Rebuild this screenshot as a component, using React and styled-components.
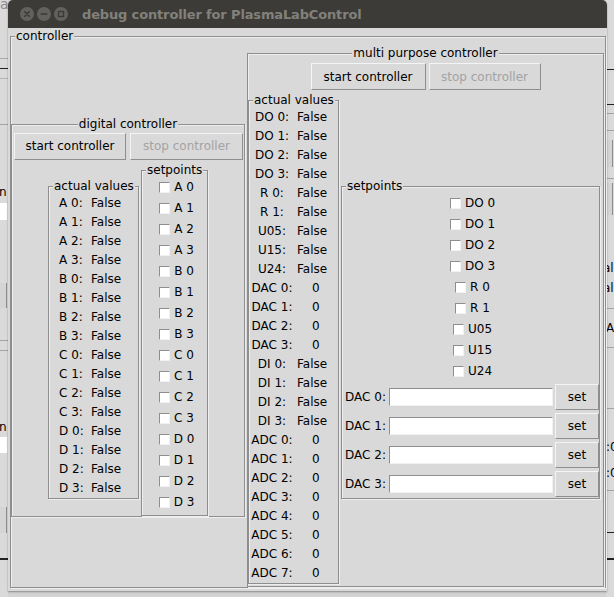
import React from 'react';
import styled, { createGlobalStyle } from 'styled-components';

const BG = '#d9d9d9';
const DARK = '#8e8e8e';
const LIGHT = '#eeeeee';

const GlobalStyle = createGlobalStyle`
  *, *::before, *::after {
    box-sizing: border-box;
  }
  html, body {
    margin: 0;
    padding: 0;
  }
  body {
    width: 614px;
    height: 597px;
    overflow: hidden;
    font-family: "DejaVu Sans", sans-serif;
    font-size: 12px;
    color: #000;
  }
`;

const Desktop = styled.div`
  position: relative;
  width: 614px;
  height: 597px;
  overflow: hidden;
  background: #d3d3d3;
`;

/* bits of the window lying behind */
const Mark = styled.div`
  position: absolute;
  top: ${p => p.$top}px;
  left: ${p => p.$left}px;
  width: ${p => p.$w}px;
  height: ${p => p.$h}px;
  background: ${p => p.$c};
  border-right: ${p => (p.$edge ? `1px solid ${DARK}` : 'none')};
`;

const BackText = styled.span`
  position: absolute;
  top: ${p => p.$top}px;
  left: ${p => p.$left}px;
  font-size: ${p => p.$size || 12}px;
  color: ${p => p.$c || '#000'};
  line-height: 1;
`;

const backMarks = [
  { top: 0, left: 0, w: 8, h: 597, c: '#dadada' },
  { top: 0, left: 606, w: 8, h: 597, c: '#dadada' },
  { top: 58, left: 0, w: 8, h: 1, c: '#a9a9a9' },
  { top: 68, left: 0, w: 8, h: 1, c: '#222' },
  { top: 78, left: 0, w: 8, h: 1, c: '#b4b4b4' },
  { top: 124, left: 0, w: 8, h: 1, c: '#a4a4a4' },
  { top: 203, left: 0, w: 7, h: 17, c: '#fff' },
  { top: 283, left: 0, w: 7, h: 25, c: '#d4d4d4', edge: true },
  { top: 340, left: 0, w: 8, h: 1, c: '#a4a4a4' },
  { top: 350, left: 0, w: 8, h: 1, c: '#a4a4a4' },
  { top: 437, left: 0, w: 7, h: 16, c: '#fff' },
  { top: 507, left: 0, w: 7, h: 26, c: '#d4d4d4', edge: true },
  { top: 558, left: 0, w: 8, h: 2, c: '#222' },
  { top: 69, left: 607, w: 7, h: 1, c: '#222' },
  { top: 104, left: 607, w: 7, h: 1, c: '#222' },
  { top: 113, left: 607, w: 7, h: 1, c: '#a4a4a4' },
  { top: 130, left: 607, w: 7, h: 1, c: '#a4a4a4' },
  { top: 140, left: 607, w: 6, h: 27, c: '#d4d4d4', edge: true },
  { top: 178, left: 607, w: 7, h: 1, c: '#a4a4a4' },
  { top: 183, left: 607, w: 6, h: 32, c: '#d4d4d4', edge: true },
  { top: 308, left: 607, w: 7, h: 1, c: '#a4a4a4' },
  { top: 347, left: 607, w: 7, h: 1, c: '#a4a4a4' },
  { top: 408, left: 607, w: 7, h: 1, c: '#a4a4a4' },
  { top: 490, left: 607, w: 7, h: 1, c: '#a4a4a4' },
  { top: 532, left: 607, w: 7, h: 1, c: '#222' },
  { top: 558, left: 607, w: 7, h: 2, c: '#222' },
];

const backTexts = [
  { top: -3, left: 0, text: 'a', size: 14, c: '#8a8a8a' },
  { top: 186, left: -1, text: 'n' },
  { top: 421, left: -1, text: 'n' },
  { top: 262, left: 603, text: 'al' },
  { top: 282, left: 603, text: 'al' },
  { top: 322, left: 606, text: 'A' },
  { top: 441, left: 606, text: ':0' },
  { top: 467, left: 606, text: ':0' },
];

/* the window */
const Window = styled.div`
  position: absolute;
  left: 8px;
  top: 0;
  width: 599px;
  height: 591px;
  display: flex;
  flex-direction: column;
  border-radius: 5px 5px 0 0;
  overflow: hidden;
  box-shadow: 0 1px 2px rgba(0, 0, 0, 0.35);
`;

const TitleBar = styled.div`
  flex: none;
  height: 28px;
  display: flex;
  align-items: center;
  gap: 3px;
  padding-left: 12px;
  background: #3c3b37;
`;

const Title = styled.span`
  margin-left: 11px;
  font-family: "DejaVu Sans", sans-serif;
  font-weight: bold;
  font-size: 13px;
  letter-spacing: -0.15px;
  color: #82817c;
  white-space: nowrap;
`;

const Content = styled.div`
  flex: 1;
  display: flex;
  padding: 8px 1px 3px 2px;
  background: ${BG};
`;

const Group = styled.div`
  display: flex;
  flex-direction: column;
  border: 1px solid ${DARK};
  box-shadow: inset 1px 1px 0 ${LIGHT}, 1px 1px 0 ${LIGHT};
`;

const Legend = styled.div`
  width: fit-content;
  height: 14px;
  line-height: 14px;
  margin: -8px ${p => (p.$center ? 'auto' : '0')} 0 ${p => (p.$center ? 'auto' : '4px')};
  padding: 0 1px;
  background: ${BG};
  white-space: nowrap;
`;

const ControllerFrame = styled(Group)`
  flex: 1;
`;

const ControllerBody = styled.div`
  flex: 1;
  display: flex;
  align-items: center;
  padding: 10px 1px 0 0;
`;

const DigitalFrame = styled(Group)`
  flex: none;
  width: 234px;
  margin-right: 2px;
`;

const MultiFrame = styled(Group)`
  flex: 1;
  align-self: stretch;
`;

const ButtonRow = styled.div`
  display: flex;
  gap: ${p => p.$gap}px;
  margin-top: ${p => p.$top}px;
  padding-left: ${p => p.$left || 0}px;
  justify-content: ${p => (p.$center ? 'center' : 'flex-start')};
`;

const Button = styled.button`
  width: ${p => p.$w}px;
  height: ${p => p.$h || 27}px;
  padding: 0;
  font-family: "DejaVu Sans", sans-serif;
  font-size: 12px;
  color: ${p => (p.disabled ? '#a3a3a3' : '#000')};
  background: ${BG};
  border: 1px solid;
  border-color: #f4f4f4 ${DARK} ${DARK} #f4f4f4;
  border-radius: 0;
`;

const PanelRow = styled.div`
  display: flex;
  align-items: center;
  justify-content: ${p => (p.$center ? 'center' : 'flex-start')};
  gap: 2px;
  margin-top: 10px;
  padding-right: ${p => p.$right || 0}px;
`;

const ValuesFrame = styled(Group)`
  flex: none;
  width: 91px;
  padding-bottom: 1px;
`;

const ValueGrid = styled.div`
  display: grid;
  grid-template-columns: ${p => p.$keyWidth}px 1fr;
  grid-auto-rows: 19px;
  align-items: center;
`;

const Key = styled.span`
  text-align: ${p => p.$align};
  padding-left: ${p => p.$pad}px;
  white-space: nowrap;
`;

const Val = styled.span`
  padding-left: ${p => p.$pad}px;
  white-space: nowrap;
`;

const SetpointFrame = styled(Group)`
  flex: ${p => (p.$grow ? 1 : 'none')};
  width: ${p => (p.$grow ? 'auto' : `${p.$w}px`)};
  padding-bottom: ${p => p.$bottom}px;
`;

const CheckList = styled.div`
  display: flex;
  flex-direction: column;
  align-items: center;
`;

const Check = styled.label`
  height: 21px;
  display: flex;
  align-items: center;
  gap: 4px;
  padding-left: 4px;
  white-space: nowrap;
`;

const Box = styled.span`
  width: 11px;
  height: 11px;
  background: #fff;
  border: 1px solid;
  border-color: ${DARK} #f2f2f2 #f2f2f2 ${DARK};
`;

const DacGrid = styled.div`
  display: grid;
  grid-template-columns: 47px 1fr 46px;
  grid-auto-rows: 26px;
  row-gap: 3px;
  align-items: center;
  margin-top: 2px;
`;

const DacLabel = styled.span`
  padding-left: 3px;
  white-space: nowrap;
`;

const Entry = styled.div`
  height: 18px;
  background: #fff;
  border: 1px solid;
  border-color: ${DARK} #f2f2f2 #f2f2f2 ${DARK};
`;

const SetButton = styled(Button)`
  margin-left: 2px;
`;

const WinButton = ({ kind }) => (
  <svg width="14" height="14" viewBox="0 0 14 14">
    <circle cx="7" cy="7" r="7" fill="#62615d" />
    <g stroke="#3a3935" strokeWidth="1.6" fill="none" strokeLinecap="round">
      {kind === 'close' && <path d="M4.8 4.8 L9.2 9.2 M9.2 4.8 L4.8 9.2" />}
      {kind === 'min' && <path d="M4.2 7 H9.8" />}
      {kind === 'max' && <rect x="4.5" y="4.5" width="5" height="5" strokeWidth="1.3" />}
    </g>
  </svg>
);

const digitalNames = ['A', 'B', 'C', 'D'].flatMap(l => [0, 1, 2, 3].map(n => `${l} ${n}`));

const multiValues = [
  ...[0, 1, 2, 3].map(n => [`DO ${n}:`, 'False']),
  ['R 0:', 'False'],
  ['R 1:', 'False'],
  ['U05:', 'False'],
  ['U15:', 'False'],
  ['U24:', 'False'],
  ...[0, 1, 2, 3].map(n => [`DAC ${n}:`, '0']),
  ...[0, 1, 2, 3].map(n => [`DI ${n}:`, 'False']),
  ...[0, 1, 2, 3, 4, 5, 6, 7].map(n => [`ADC ${n}:`, '0']),
];

const multiSetpoints = ['DO 0', 'DO 1', 'DO 2', 'DO 3', 'R 0', 'R 1', 'U05', 'U15', 'U24'];

const Checkbutton = ({ label }) => (
  <Check>
    <Box />
    {label}
  </Check>
);

const ControllerButtons = ({ widths, gap, top, left, center }) => (
  <ButtonRow $gap={gap} $top={top} $left={left} $center={center}>
    <Button $w={widths[0]}>start controller</Button>
    <Button $w={widths[1]} disabled>stop controller</Button>
  </ButtonRow>
);

export default function App() {
  return (
    <>
      <GlobalStyle />
      <Desktop>
        {backMarks.map((m, i) => (
          <Mark key={i} $top={m.top} $left={m.left} $w={m.w} $h={m.h} $c={m.c} $edge={m.edge} />
        ))}
        {backTexts.map((t, i) => (
          <BackText key={i} $top={t.top} $left={t.left} $size={t.size} $c={t.c}>
            {t.text}
          </BackText>
        ))}

        <Window>
          <TitleBar>
            <WinButton kind="close" />
            <WinButton kind="min" />
            <WinButton kind="max" />
            <Title>debug controller for PlasmaLabControl</Title>
          </TitleBar>

          <Content>
            <ControllerFrame>
              <Legend>controller</Legend>
              <ControllerBody>
                <DigitalFrame>
                  <Legend $center>digital controller</Legend>
                  <ControllerButtons widths={[112, 113]} gap={4} top={2} left={2} />
                  <PanelRow $center>
                    <ValuesFrame>
                      <Legend>actual values</Legend>
                      <ValueGrid $keyWidth={42}>
                        {digitalNames.map(n => (
                          <React.Fragment key={n}>
                            <Key $align="left" $pad={10}>{n}:</Key>
                            <Val $pad={0}>False</Val>
                          </React.Fragment>
                        ))}
                      </ValueGrid>
                    </ValuesFrame>
                    <SetpointFrame $w={67} $bottom={2}>
                      <Legend>setpoints</Legend>
                      <CheckList>
                        {digitalNames.map(n => (
                          <Checkbutton key={n} label={n} />
                        ))}
                      </CheckList>
                    </SetpointFrame>
                  </PanelRow>
                </DigitalFrame>

                <MultiFrame>
                  <Legend $center>multi purpose controller</Legend>
                  <ControllerButtons widths={[115, 112]} gap={3} top={3} center />
                  <PanelRow $right={3}>
                    <ValuesFrame>
                      <Legend>actual values</Legend>
                      <ValueGrid $keyWidth={46}>
                        {multiValues.map(([k, v]) => (
                          <React.Fragment key={k}>
                            <Key $align="center" $pad={0}>{k}</Key>
                            <Val $pad={v === '0' ? 17 : 2}>{v}</Val>
                          </React.Fragment>
                        ))}
                      </ValueGrid>
                    </ValuesFrame>
                    <SetpointFrame $grow $bottom={1}>
                      <Legend>setpoints</Legend>
                      <CheckList>
                        {multiSetpoints.map(n => (
                          <Checkbutton key={n} label={n} />
                        ))}
                      </CheckList>
                      <DacGrid>
                        {[0, 1, 2, 3].map(n => (
                          <React.Fragment key={n}>
                            <DacLabel>DAC {n}:</DacLabel>
                            <Entry />
                            <SetButton $w={44} $h={26}>set</SetButton>
                          </React.Fragment>
                        ))}
                      </DacGrid>
                    </SetpointFrame>
                  </PanelRow>
                </MultiFrame>
              </ControllerBody>
            </ControllerFrame>
          </Content>
        </Window>
      </Desktop>
    </>
  );
}
